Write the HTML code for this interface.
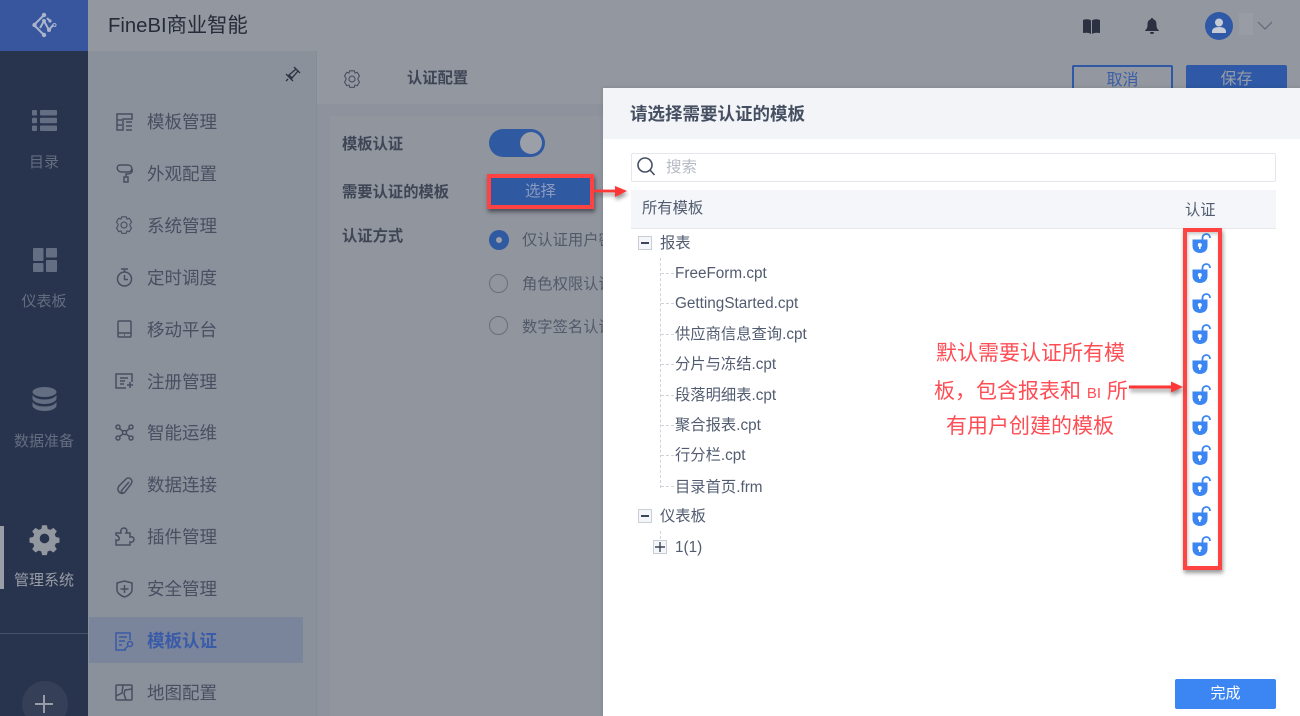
<!DOCTYPE html>
<html lang="zh"><head><meta charset="utf-8"><title>FineBI</title>
<style>
html,body{margin:0;padding:0;width:1300px;height:716px;overflow:hidden}
#root{position:absolute;left:0;top:0;width:1300px;height:716px;overflow:hidden;background:#93979f;font-family:"Liberation Sans","Noto Sans CJK SC",sans-serif;color:#3d4657}
.a{position:absolute;white-space:nowrap}
svg{position:absolute;overflow:visible}
.nav{width:88px;left:0;text-align:center;font-size:15px;line-height:20px;color:#646d80;padding-top:1px}
.m{left:147px;font-size:17.5px;line-height:24px;color:#474f60;padding-top:1px}
.ic{fill:none;stroke:#474f60;stroke-width:1.5}
.t{font-size:15.3px;line-height:20px;color:#525c70;padding-top:1px}
.lock{left:1192px;width:20px;height:24px}
.d{left:661px;width:13px;border-top:1px dashed #cfd3da}
.ann{font-size:21px;line-height:30px;color:#ff4d55}
.b{font-size:15.3px;line-height:20px;font-weight:700;color:#3e4555}
.r{left:522px;width:81px;overflow:hidden;font-size:15.3px;line-height:20px;color:#525a6a}
</style></head><body><div id="root">

<!-- left rail -->
<div class="a" style="left:0;top:0;width:88px;height:716px;background:#28344d"></div>
<div class="a" style="left:0;top:0;width:88px;height:51px;background:#37569e"></div>
<svg style="left:33px;top:13px" width="24" height="24" viewBox="0 0 24 24"><g fill="none" stroke="#aab4cb" stroke-width="2"><path d="M11 2 1 12l10 10M7 15l4-7 5 9 4-5M14 5l3 3"/></g><g fill="#aab4cb"><circle cx="11" cy="2" r="2.200"/><circle cx="1.500" cy="12" r="2.200"/><circle cx="11" cy="22" r="2.200"/><circle cx="11" cy="8" r="2"/><circle cx="16" cy="17" r="2"/><circle cx="17" cy="8" r="1.600"/></g><circle cx="21.500" cy="12" r="1.500" fill="none" stroke="#aab4cb"/></svg>

<svg style="left:32px;top:110px" width="25" height="21" viewBox="0 0 25 21" fill="#646e82"><rect width="5" height="5.500" rx="1"/><rect x="8" width="17" height="5.500" rx="1"/><rect y="7.700" width="5" height="5.500" rx="1"/><rect x="8" y="7.700" width="17" height="5.500" rx="1"/><rect y="15.500" width="5" height="5.500" rx="1"/><rect x="8" y="15.500" width="17" height="5.500" rx="1"/></svg>
<div class="a nav" style="top:152px">目录</div>
<svg style="left:33px;top:248px" width="24" height="24" viewBox="0 0 24 24" fill="#646e82"><rect width="10.500" height="13" rx="1"/><rect x="13" width="11" height="9.500" rx="1"/><rect y="15" width="10.500" height="9" rx="1"/><rect x="13" y="12" width="11" height="12" rx="1"/></svg>
<div class="a nav" style="top:291px">仪表板</div>
<svg style="left:32px;top:387px" width="25" height="25" viewBox="0 0 25 25" fill="#646e82"><ellipse cx="12.500" cy="5" rx="12" ry="5"/><path d="M.5 8c2 3 6 4.500 12 4.500S22.500 11 24.500 8v4c-1 3-6 5-12 5S1.500 15 .5 12z"/><path d="M.5 15c2 3 6 4.500 12 4.500s10-1.500 12-4.500v4c-1 3-6 5-12 5S1.500 22 .5 19z"/></svg>
<div class="a nav" style="top:431px">数据准备</div>
<div class="a" style="left:0;top:526px;width:4px;height:63px;background:#9a9ea7"></div>
<svg style="left:30px;top:524px" width="29" height="29" viewBox="0 0 24 24"><path fill="#93979f" fill-rule="evenodd" d="M10 1h4l.6 3 2.200.9 2.600-1.700 2.800 2.800-1.700 2.600.9 2.200 3 .6v4l-3 .6-.9 2.200 1.700 2.600-2.800 2.800-2.600-1.700-2.200.9-.6 3h-4l-.6-3-2.200-.9-2.600 1.700-2.800-2.800 1.700-2.600-.9-2.200-3-.6v-4l3-.6.9-2.200L1.800 6l2.800-2.800 2.600 1.700L9.400 4zM12 8a4 4 0 1 0 0 8 4 4 0 0 0 0-8z"/></svg>
<div class="a nav" style="top:570px;color:#989ca6">管理系统</div>
<div class="a" style="left:0;top:633px;width:88px;height:1px;background:#46506a"></div>
<div class="a" style="left:22px;top:681px;width:46px;height:46px;border-radius:50%;background:#363f58"></div>
<svg style="left:35px;top:695px" width="18" height="18"><path d="M9 0v18M0 9h18" stroke="#989ca6" stroke-width="2"/></svg>

<!-- top bar -->
<div class="a" style="left:108px;top:12px;font-size:20.3px;line-height:28px;color:#252b38">FineBI商业智能</div>
<svg style="left:1083px;top:19px" width="17" height="15" viewBox="0 0 17 15" fill="#2b3140"><path d="M0 1c3-1 6-1 8 .5V15C6 13.500 3 13.500 0 14zM17 1c-3-1-6-1-8 .5V15c2-1.500 5-1.500 8-1z"/></svg>
<svg style="left:1145px;top:18px" width="14" height="16" viewBox="0 0 14 16" fill="#2b3140"><path d="M7 0c1 0 1.200.7 1.200 1.200C11 2 11.500 4 11.500 7c0 2 .5 4 2.500 5.500V13H0v-.5C2 11 2.500 9 2.500 7c0-3 .5-5 3.300-5.800C5.800.7 6 0 7 0zM5 14h4a2 2 0 0 1-4 0z"/></svg>
<div class="a" style="left:1205px;top:12px;width:28px;height:28px;border-radius:50%;background:#2f59a6"></div>
<svg style="left:1212px;top:18px" width="14" height="15" viewBox="0 0 14 15" fill="#c6cbd6"><circle cx="7" cy="4.500" r="4"/><path d="M0 15v-1.500C0 10.500 3 9 7 9s7 1.500 7 4.500V15z"/></svg>
<div class="a" style="left:1239px;top:13px;width:14px;height:22px;background:#989ca5"></div>
<svg style="left:1257px;top:21px" width="16" height="10"><path d="M1 1l7 7 7-7" fill="none" stroke="#62687a" stroke-width="1.200"/></svg>

<!-- second-level menu -->
<div class="a" style="left:88px;top:51px;width:229px;height:665px;background:#8b919b"></div>
<div class="a" style="left:316px;top:51px;width:1px;height:665px;background:#858b97"></div>
<svg style="left:285px;top:66px" width="16" height="16" viewBox="0 0 16 16" fill="none" stroke="#2b3140" stroke-width="1.300"><path d="M9 1 15 7M10.500 2.500 13.500 5.500M11 3 4 9l3 3 6-7M1 8 8 15M3 13 1 15"/></svg>

<svg class="ic" style="left:116px;top:113px" width="17" height="18" viewBox="0 0 17 18"><path d="M1 1h15v5H7v11H1zM1 7h5M1 12h5M10 9h6M10 13h6M10 17h6"/></svg>
<div class="a m" style="top:109px">模板管理</div>
<svg class="ic" style="left:116px;top:164px" width="17" height="19" viewBox="0 0 17 19"><path d="M4 1h8c5 0 5 7 0 7H6c-6 0-6-7-2-7zM16 5c1 4-2 5-6 5v3M8 13h4v5H8z"/></svg>
<div class="a m" style="top:161px">外观配置</div>
<svg class="ic" style="left:115px;top:216px" width="18" height="18" viewBox="0 0 24 24" stroke-width="2"><circle cx="12" cy="12" r="4"/><path d="M9 1h6l1 3 3-1 3 5-2 3v2l2 3-3 5-3-1-1 3H9l-1-3-3 1-3-5 2-3v-2L2 8l3-5 3 1z"/></svg>
<div class="a m" style="top:213px">系统管理</div>
<svg class="ic" style="left:116px;top:268px" width="17" height="19" viewBox="0 0 17 19"><circle cx="8.500" cy="11" r="7"/><path d="M5 1h7M8.500 1v3M8.500 7v4.500H12"/></svg>
<div class="a m" style="top:265px">定时调度</div>
<svg class="ic" style="left:117px;top:320px" width="15" height="18" viewBox="0 0 15 18"><rect x="1" y="1" width="13" height="16" rx="1"/><path d="M1 13h13M7 15h1"/></svg>
<div class="a m" style="top:317px">移动平台</div>
<svg class="ic" style="left:115px;top:373px" width="19" height="16" viewBox="0 0 19 16"><path d="M17 9V1H1v14h10M5 5h8M5 8h5M5 11h4M12 12h6M15 9v6"/></svg>
<div class="a m" style="top:369px">注册管理</div>
<svg class="ic" style="left:115px;top:424px" width="19" height="17" viewBox="0 0 19 17"><circle cx="3" cy="3" r="2"/><circle cx="16" cy="3" r="2"/><circle cx="3" cy="14" r="2"/><circle cx="16" cy="14" r="2"/><circle cx="9.500" cy="8.500" r="2"/><path d="M4.500 4.500l3.500 3M14.500 4.500l-3.500 3M4.500 12.500 8 10M14.500 12.500 11 10"/></svg>
<div class="a m" style="top:420px">智能运维</div>
<svg class="ic" style="left:116px;top:476px" width="17" height="19" viewBox="0 0 17 19"><path d="M13 6l-7 8c-2 2 1 4 3 2l6-8c3-4-2-8-5-5L3 10c-3 4 1 9 5 7"/></svg>
<div class="a m" style="top:472px">数据连接</div>
<svg class="ic" style="left:115px;top:527px" width="20" height="19" viewBox="0 0 20 19"><path d="M1 18v-5c2 1 4-.5 3-2.500S1 8 1 8V6h5c-1-3 1-5 3-5s4 2 2 5h4v4c3-1 4 1 4 2.500S17 16 15 15v3z"/></svg>
<div class="a m" style="top:524px">插件管理</div>
<svg class="ic" style="left:116px;top:580px" width="17" height="18" viewBox="0 0 17 18"><path d="M8.500 1 16 3v7c0 3-4 6-7.500 7C5 16 1 13 1 10V3zM4.500 9h8M8.500 5v8"/></svg>
<div class="a m" style="top:576px">安全管理</div>
<div class="a" style="left:89px;top:617px;width:214px;height:46px;background:#7a849b"></div>
<svg class="ic" style="left:115px;top:632px;stroke:#3a5ba8" width="19" height="19" viewBox="0 0 19 19"><path d="M15 8V1H1v17h10M4 5h8M4 9h6M4 13h3"/><circle cx="15" cy="12" r="2.500"/><path d="M13 14l-4 4"/></svg>
<div class="a m" style="top:628px;color:#3a5ba8;font-weight:700">模板认证</div>
<svg class="ic" style="left:115px;top:684px" width="18" height="17" viewBox="0 0 18 17"><rect x="1" y="1" width="16" height="15" rx="1"/><path d="M1 12l6-3 1-8M17 5l-7 1-1 4 2 6"/></svg>
<div class="a m" style="top:680px">地图配置</div>
<div class="a" style="left:320px;top:379px;width:6px;height:14px;background:repeating-linear-gradient(#5b6272 0 2px,transparent 2px 3px)"></div>

<!-- page header & content -->
<svg class="ic" style="left:343px;top:70px" width="18" height="18" viewBox="0 0 24 24" stroke-width="1.800"><circle cx="12" cy="12" r="4"/><path d="M9 1h6l1 3 3-1 3 5-2 3v2l2 3-3 5-3-1-1 3H9l-1-3-3 1-3-5 2-3v-2L2 8l3-5 3 1z"/></svg>
<div class="a b" style="left:407px;top:69px">认证配置</div>
<div class="a" style="left:1072px;top:65px;width:97px;height:23px;border:2px solid #2f59a6;border-bottom:0;border-radius:2px 2px 0 0;text-align:center;font-size:16px;line-height:27px;color:#3b5ea6;overflow:hidden">取消</div>
<div class="a" style="left:1186px;top:65px;width:101px;height:23px;background:#2f59a6;border-radius:2px 2px 0 0;text-align:center;font-size:16px;line-height:29px;color:#989ca6;overflow:hidden">保存</div>
<div class="a" style="left:317px;top:104px;width:290px;height:612px;background:#8d929c"></div>
<div class="a" style="left:330px;top:116px;width:277px;height:600px;background:#91959e"></div>
<div class="a b" style="left:342px;top:135px">模板认证</div>
<div class="a" style="left:489px;top:129px;width:56px;height:28px;border-radius:14px;background:#2f59a0"></div>
<div class="a" style="left:520px;top:132px;width:22px;height:22px;border-radius:50%;background:#9b9fa8"></div>
<div class="a b" style="left:342px;top:183px">需要认证的模板</div>
<div class="a" style="left:487px;top:174px;width:107px;height:35px;background:#2f59a0;border:4px solid #ff4242;box-sizing:border-box;box-shadow:1px 3px 4px #4d5058;text-align:center;font-size:15.5px;line-height:27px;color:#8d9ac0">选择</div>
<div class="a b" style="left:342px;top:227px">认证方式</div>
<div class="a" style="left:489px;top:230px;width:20px;height:20px;border-radius:50%;background:#2f59a0"></div>
<div class="a" style="left:496px;top:237px;width:6px;height:6px;border-radius:50%;background:#9b9fa8"></div>
<div class="a r" style="top:231px">仅认证用户密码</div>
<div class="a" style="left:489px;top:274px;width:17px;height:17px;border:1.600px solid #676e7e;border-radius:50%"></div>
<div class="a r" style="top:275px">角色权限认证方式</div>
<div class="a" style="left:489px;top:316px;width:17px;height:17px;border:1.600px solid #676e7e;border-radius:50%"></div>
<div class="a r" style="top:318px">数字签名认证方式</div>

<!-- modal -->
<div class="a" style="left:603px;top:88px;width:697px;height:628px;background:#fff;box-shadow:0 0 4px rgba(0,0,0,.15)"></div>
<div class="a" style="left:603px;top:88px;width:697px;height:51px;background:#f2f4f8"></div>
<div class="a" style="left:630px;top:102px;font-size:17.5px;line-height:25px;font-weight:700;color:#454f61">请选择需要认证的模板</div>
<div class="a" style="left:631px;top:153px;width:643px;height:27px;border:1.500px solid #e4e7ec;border-radius:2px"></div>
<svg style="left:637px;top:157px" width="19" height="20" viewBox="0 0 19 20" fill="none" stroke="#465063" stroke-width="1.600"><circle cx="8" cy="8" r="7"/><path d="M13 13l4.500 5"/></svg>
<div class="a" style="left:666px;top:158px;font-size:15.5px;line-height:20px;color:#b5bac4">搜索</div>
<div class="a" style="left:631px;top:190px;width:645px;height:38px;background:#f4f6f9;border-bottom:1.500px solid #e6e9ee"></div>
<div class="a t" style="left:642px;top:198px">所有模板</div>
<div class="a t" style="left:1185px;top:200px">认证</div>

<div class="a" style="left:638px;top:236px;width:12px;height:12px;border:1px solid #c9cdd6;background:#f4f6f9"></div>
<div class="a" style="left:641px;top:242px;width:8px;height:1.500px;background:#3d4657"></div>
<div class="a t" style="left:660px;top:233px">报表</div>
<div class="a" style="left:660px;top:258px;height:230px;border-left:1px dashed #cfd3da"></div>
<div class="a d" style="top:273px"></div>
<div class="a d" style="top:303px"></div>
<div class="a d" style="top:334px"></div>
<div class="a d" style="top:364px"></div>
<div class="a d" style="top:395px"></div>
<div class="a d" style="top:425px"></div>
<div class="a d" style="top:455px"></div>
<div class="a d" style="top:486px"></div>
<div class="a t" style="left:675px;top:263px">FreeForm.cpt</div>
<div class="a t" style="left:675px;top:293px">GettingStarted.cpt</div>
<div class="a t" style="left:675px;top:324px">供应商信息查询.cpt</div>
<div class="a t" style="left:675px;top:354px">分片与冻结.cpt</div>
<div class="a t" style="left:675px;top:385px">段落明细表.cpt</div>
<div class="a t" style="left:675px;top:415px">聚合报表.cpt</div>
<div class="a t" style="left:675px;top:445px">行分栏.cpt</div>
<div class="a t" style="left:675px;top:477px">目录首页.frm</div>
<div class="a" style="left:638px;top:509px;width:12px;height:12px;border:1px solid #c9cdd6;background:#f4f6f9"></div>
<div class="a" style="left:641px;top:515px;width:8px;height:1.500px;background:#3d4657"></div>
<div class="a t" style="left:660px;top:506px">仪表板</div>
<div class="a" style="left:660px;top:531px;height:8px;border-left:1px dashed #cfd3da"></div>
<div class="a" style="left:653px;top:540px;width:12px;height:12px;border:1px solid #c9cdd6;background:#f4f6f9"></div>
<svg style="left:655px;top:542px" width="10" height="10"><path d="M5 0v10M0 5h10" stroke="#3d4657" stroke-width="1.400"/></svg>
<div class="a t" style="left:675px;top:537px">1(1)</div>

<!-- lock icons -->
<svg width="0" height="0" style="left:0;top:0"><defs><g id="l"><path d="M10.500 7V4.800C10.500 2.500 12.300 1 14.300 1S18 2.500 18 5" fill="none" stroke="#3b86f3" stroke-width="1.800"/><path d="M.5 6.500h15V13c0 4.500-3.500 7-7.500 7S.5 17.500.5 13z" fill="#3b86f3"/><circle cx="7.800" cy="12" r="2" fill="#fff"/><path d="M7 12.500h1.600V16H7z" fill="#fff"/></g></defs></svg>
<svg class="lock" style="top:233px" viewBox="0 0 20 24" width="20" height="24"><use href="#l"/></svg>
<svg class="lock" style="top:263px" viewBox="0 0 20 24" width="20" height="24"><use href="#l"/></svg>
<svg class="lock" style="top:293px" viewBox="0 0 20 24" width="20" height="24"><use href="#l"/></svg>
<svg class="lock" style="top:324px" viewBox="0 0 20 24" width="20" height="24"><use href="#l"/></svg>
<svg class="lock" style="top:354px" viewBox="0 0 20 24" width="20" height="24"><use href="#l"/></svg>
<svg class="lock" style="top:385px" viewBox="0 0 20 24" width="20" height="24"><use href="#l"/></svg>
<svg class="lock" style="top:415px" viewBox="0 0 20 24" width="20" height="24"><use href="#l"/></svg>
<svg class="lock" style="top:445px" viewBox="0 0 20 24" width="20" height="24"><use href="#l"/></svg>
<svg class="lock" style="top:476px" viewBox="0 0 20 24" width="20" height="24"><use href="#l"/></svg>
<svg class="lock" style="top:506px" viewBox="0 0 20 24" width="20" height="24"><use href="#l"/></svg>
<svg class="lock" style="top:536px" viewBox="0 0 20 24" width="20" height="24"><use href="#l"/></svg>

<div class="a" style="left:1183px;top:228px;width:39px;height:342px;box-sizing:border-box;border:4px solid #ff4242;box-shadow:1px 3px 4px rgba(70,70,70,.55),inset 1px 2px 3px rgba(70,70,70,.3)"></div>

<!-- arrows -->
<svg style="left:594px;top:184px;filter:drop-shadow(1px 3px 2px rgba(70,70,70,.6))" width="34" height="16"><path d="M0 7h23" stroke="#ff3636" stroke-width="2.800"/><path d="M21 2l12 5-12 6z" fill="#ff3636"/></svg>
<svg style="left:1129px;top:380px;filter:drop-shadow(1px 3px 2px rgba(70,70,70,.6))" width="56" height="16"><path d="M0 7h44" stroke="#ff3636" stroke-width="3"/><path d="M42 1.500l12 5.500-12 5.500z" fill="#ff3636"/></svg>

<!-- annotation -->
<div class="a ann" style="left:936px;top:339px">默认需要认证所有模</div>
<div class="a ann" style="left:934px;top:377px">板，包含报表和 <span style="font-size:15px">BI</span> 所</div>
<div class="a ann" style="left:946px;top:412px">有用户创建的模板</div>

<div class="a" style="left:1175px;top:679px;width:101px;height:30px;background:#3b86f3;border-radius:2px;text-align:center;font-size:15px;line-height:30px;color:#fff">完成</div>
</div></body></html>
